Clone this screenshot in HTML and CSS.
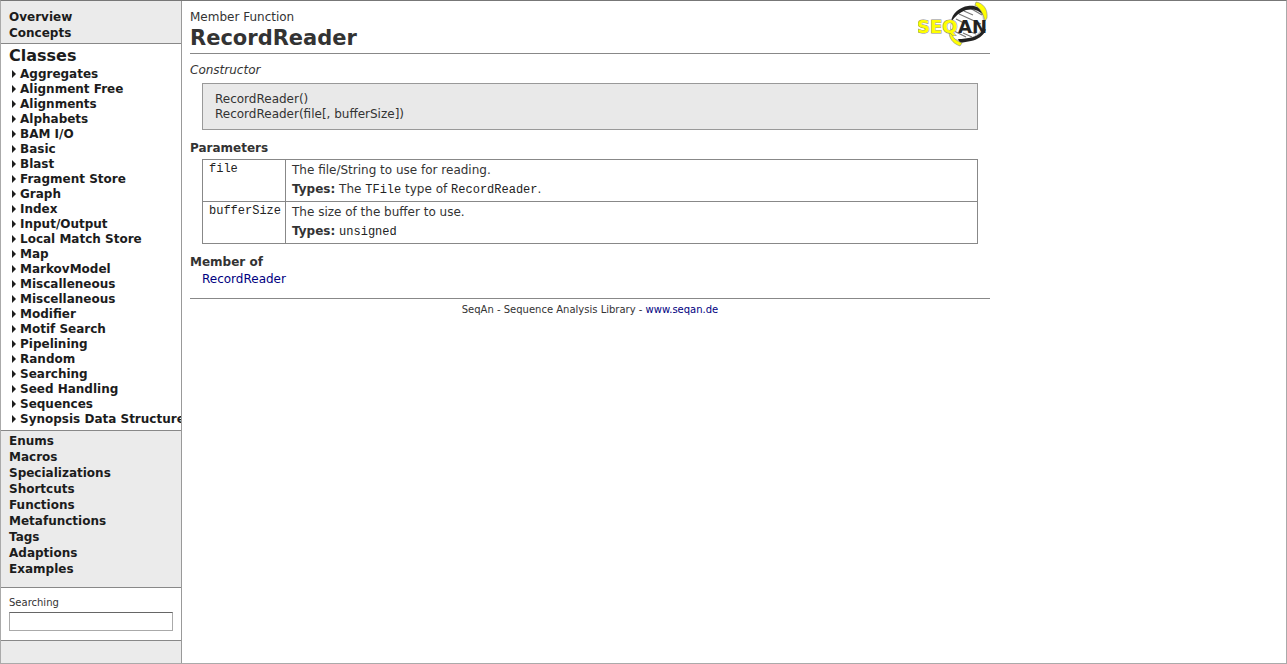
FILE: index.html
```html
<!DOCTYPE html>
<html lang="en">
<head>
<meta charset="utf-8">
<title>RecordReader - SeqAn</title>
<link rel="stylesheet" href="styles.css">
</head>
<body>
<div class="page">
  <nav class="sidebar">
    <ul class="group group-top">
      <li><a href="#overview">Overview</a></li>
      <li><a href="#concepts">Concepts</a></li>
    </ul>
    <div class="current">
      <h2 class="current-title"><a href="#classes">Classes</a></h2>
      <ul class="tree">
        <li><a href="#aggregates">Aggregates</a></li>
        <li><a href="#alignment-free">Alignment Free</a></li>
        <li><a href="#alignments">Alignments</a></li>
        <li><a href="#alphabets">Alphabets</a></li>
        <li><a href="#bam">BAM I/O</a></li>
        <li><a href="#basic">Basic</a></li>
        <li><a href="#blast">Blast</a></li>
        <li><a href="#fragment-store">Fragment Store</a></li>
        <li><a href="#graph">Graph</a></li>
        <li><a href="#index">Index</a></li>
        <li><a href="#io">Input/Output</a></li>
        <li><a href="#local-match-store">Local Match Store</a></li>
        <li><a href="#map">Map</a></li>
        <li><a href="#markov">MarkovModel</a></li>
        <li><a href="#miscalleneous">Miscalleneous</a></li>
        <li><a href="#miscellaneous">Miscellaneous</a></li>
        <li><a href="#modifier">Modifier</a></li>
        <li><a href="#motif-search">Motif Search</a></li>
        <li><a href="#pipelining">Pipelining</a></li>
        <li><a href="#random">Random</a></li>
        <li><a href="#searching">Searching</a></li>
        <li><a href="#seed-handling">Seed Handling</a></li>
        <li><a href="#sequences">Sequences</a></li>
        <li><a href="#synopsis">Synopsis Data Structure</a></li>
      </ul>
    </div>
    <ul class="group group-rest">
      <li><a href="#enums">Enums</a></li>
      <li><a href="#macros">Macros</a></li>
      <li><a href="#specializations">Specializations</a></li>
      <li><a href="#shortcuts">Shortcuts</a></li>
      <li><a href="#functions">Functions</a></li>
      <li><a href="#metafunctions">Metafunctions</a></li>
      <li><a href="#tags">Tags</a></li>
      <li><a href="#adaptions">Adaptions</a></li>
      <li><a href="#examples">Examples</a></li>
    </ul>
    <form class="search">
      <label for="search">Searching</label>
      <input id="search" type="text">
    </form>
  </nav>

  <main class="content">
    <header class="head">
      <div>
        <p class="kind">Member Function</p>
        <h1 class="title">RecordReader</h1>
      </div>
      <svg class="logo" viewBox="0 0 72 46" role="img" aria-label="SeqAn">
        <path d="M34 37C30 26 34 14 43 9C48 6 55 6 60 4C67 12 67 25 61 32C55 38 47 38 44 41Z" fill="#fff" stroke="#999" stroke-width=".7"/>
        <path d="M46 10L55 14M52 7L64 14M41 13L63 23M38 18L46 22M36 30L48 36M45 32L54 36M53 31L58 33" stroke="#777" stroke-width="1.2"/>
        <path d="M33 21C34 12 42 6 50 5C56 4 62 6 65 11L66 15C60 8 54 8 48 9C42 11 37 15 33 21Z" fill="#222"/>
        <path d="M68 28C66 35 59 39 53 40L42 42L40 38C50 38 59 36 63 31Z" fill="#222"/>
        <path d="M58 1C65 2 70 8 69 17L67 20C65 12 62 7 57 4Z" fill="#ff0" stroke="#888" stroke-width=".6"/>
        <path d="M34 28C33 35 36 39 44 42L42 45C34 42 31 37 31 30Z" fill="#ff0" stroke="#888" stroke-width=".6"/>
        <text x="-1" y="32" class="logo-seq">SEQ</text>
        <text x="40" y="32" class="logo-an">AN</text>
      </svg>
    </header>

    <p class="note">Constructor</p>
    <div class="signature">
      <div>RecordReader()</div>
      <div>RecordReader(file[, bufferSize])</div>
    </div>

    <h2 class="section">Parameters</h2>
    <table class="params">
      <tbody>
        <tr>
          <th scope="row"><code>file</code></th>
          <td>
            <p>The file/String to use for reading.</p>
            <p class="types"><b>Types:</b> The <code>TFile</code> type of <code>RecordReader</code>.</p>
          </td>
        </tr>
        <tr>
          <th scope="row"><code>bufferSize</code></th>
          <td>
            <p>The size of the buffer to use.</p>
            <p class="types"><b>Types:</b> <code>unsigned</code></p>
          </td>
        </tr>
      </tbody>
    </table>

    <h2 class="section">Member of</h2>
    <p class="member"><a href="#recordreader">RecordReader</a></p>

    <footer class="foot">SeqAn - Sequence Analysis Library - <a href="#seqan">www.seqan.de</a></footer>
  </main>
</div>
</body>
</html>
```

FILE: styles.css
```css
* { box-sizing: border-box; }

body {
  margin: 0;
  background: #fff;
  color: #333;
  font: 12px/15px Verdana, "DejaVu Sans", sans-serif;
}

h1, h2, p, ul { margin: 0; padding: 0; }
ul { list-style: none; }
a { color: #000080; text-decoration: none; }
code { font: 12px/14px "Courier New", "Liberation Mono", monospace; color: #222; }

.page {
  display: flex;
  min-height: 100vh;
  border: 1px solid #aaa;
  border-top-color: #777;
}

.sidebar {
  flex: 0 0 181px;
  overflow: hidden;
  background: #ebebeb;
  border-right: 1px solid #999;
  font-weight: bold;
}
.sidebar a { color: #1c1c1c; white-space: nowrap; }

.group { padding: 0 8px; line-height: 16px; }
.group-top { padding-top: 8px; padding-bottom: 2px; }
.group-rest { padding-top: 2px; padding-bottom: 10px; }

.current {
  padding: 2px 0 3px 8px;
  background: #fff;
  border-top: 1px solid #888;
  border-bottom: 1px solid #888;
}
.current-title { font-size: 16px; line-height: 20px; margin-bottom: 1px; }

.tree li {
  display: flex;
  align-items: flex-start;
  gap: 4px;
  padding-left: 3px;
}
.tree li::before {
  content: "";
  margin-top: 3px;
  border: 4px solid transparent;
  border-left-color: #1c1c1c;
  border-right-width: 0;
}

.search {
  padding: 8px 8px 9px;
  background: #fff;
  border-top: 1px solid #888;
  border-bottom: 1px solid #888;
  font-size: 10px;
  font-weight: normal;
}
.search label { display: block; line-height: 14px; margin-bottom: 2px; }
.search input {
  display: block;
  width: 100%;
  height: 19px;
  padding: 2px;
  border: 1px solid #aaa;
  border-top-color: #666;
  background: #fff;
  font: inherit;
}

.content {
  flex: 0 1 816px;
  min-width: 0;
  padding: 0 8px;
}

.head {
  display: flex;
  justify-content: space-between;
  align-items: flex-start;
  padding-bottom: 2px;
  border-bottom: 1px solid #888;
}
.kind { padding-top: 8px; line-height: 16px; }
.title { font-size: 21px; line-height: 26px; }
.logo { width: 72px; height: 46px; }
.logo text { font-family: Verdana, "DejaVu Sans", sans-serif; font-weight: bold; font-size: 18px; }
.logo-seq { fill: #ff0; stroke: #888; stroke-width: 1px; paint-order: stroke; }
.logo-an { fill: #222; }

.note { margin-top: 9px; font-style: italic; }

.signature {
  margin: 5px 12px 0;
  padding: 8px 12px 7px;
  background: #e9e9e9;
  border: 1px solid #999;
}

.section { margin-top: 10px; font-size: 12px; line-height: 16px; }

.params {
  width: calc(100% - 24px);
  margin: 3px 12px 0;
  border-collapse: collapse;
}
.params th, .params td {
  padding: 3px 6px 4px;
  border: 1px solid #888;
  text-align: left;
  vertical-align: top;
  font-weight: normal;
}
.params th { width: 83px; padding-top: 1px; padding-right: 4px; }
.types { margin-top: 4px; }

.member { margin: 2px 12px 0; }

.foot {
  margin-top: 11px;
  padding-top: 4px;
  border-top: 1px solid #888;
  font-size: 10px;
  line-height: 14px;
  text-align: center;
}
```
